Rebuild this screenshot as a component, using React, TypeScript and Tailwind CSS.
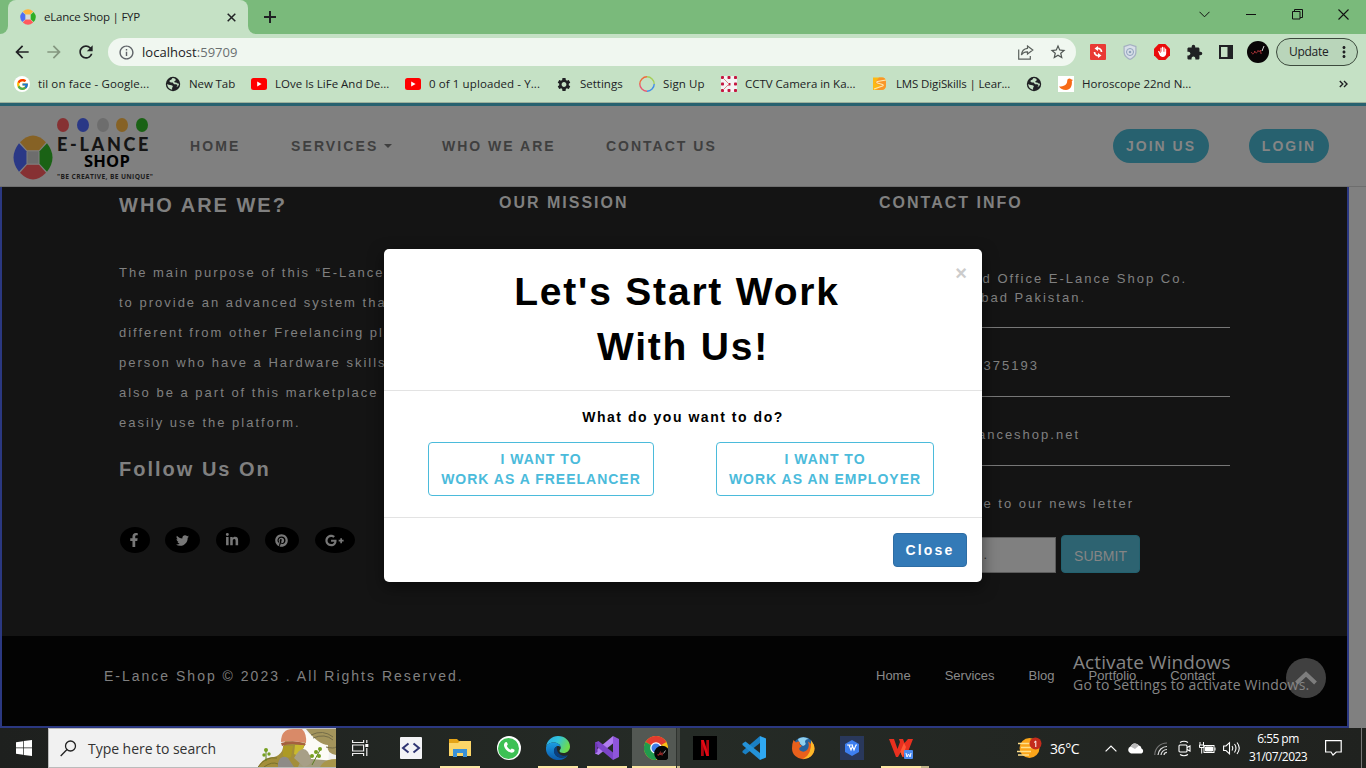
import React from "react";
import {
  MdArrowBack,
  MdArrowForward,
  MdRefresh,
  MdInfoOutline,
  MdStarBorder,
  MdExtension,
  MdSettings,
  MdMoreVert,
  MdBackHand,
} from "react-icons/md";
import { FcGoogle } from "react-icons/fc";
import {
  FaFacebookF,
  FaTwitter,
  FaLinkedinIn,
  FaPinterest,
  FaGooglePlusG,
  FaWhatsapp,
} from "react-icons/fa";

const YouTube = () => (
  <svg width="16" height="16" viewBox="0 0 16 16">
    <rect x="0" y="2" width="16" height="12" rx="2.5" fill="#f00" />
    <path d="M6.2 5.5v5L10.6 8z" fill="#fff" />
  </svg>
);

const Globe = () => (
  <svg width="16" height="16" viewBox="0 0 16 16">
    <circle cx="8" cy="8" r="7.2" fill="#202124" />
    <path
      d="M7.6 2.1c-.9.8-1 1.600-2.100 2-.9.3-1.400 1.300-.6 2 .8.6 1.900 0 2.800.5.800.5.4 1.400 1.500 1.600 1.100.2 2.400-.2 3 .6.500.8-.2 1.700-.8 2.400 1.700-.7 2.600-2 2.600-3.600-.9.3-1.500-.4-2.300-.9-.9-.5-2.300.1-2.500-.9-.2-.9 1.400-.8 1.500-1.900.1-.9-.8-1.600-3.100-1.800zM2.200 8c0 2.800 1.900 5.200 4.900 5.800.3-.9-.4-1.400.2-2.200.5-.7.9-1.500-.1-2-1.100-.6-2.900-.4-5-1.600z"
      fill="#c5e1c5"
    />
  </svg>
);

const Wheel = ({ size, h, dim }: { size: number; h: number; dim?: boolean }) => {
  const c = dim
    ? ["#866225", "#1a6215", "#863133", "#2a3886", "#6d6d6d", "#838383"]
    : ["#ffb43c", "#2fae24", "#ff5a5d", "#4f6df5", "#d9d9d9", "#c5e1c5"];
  return (
    <svg width={size} height={h} viewBox="0 0 40 44" preserveAspectRatio="none">
      <path d="M7 7Q20-6 33 7L26 15H14z" fill={c[0]} />
      <path d="M34 8Q45 22 34 36L26.500 28V16z" fill={c[1]} />
      <path d="M33 37Q20 50 7 37L14 29H26z" fill={c[2]} />
      <path d="M6 36Q-5 22 6 8L13.500 16V28z" fill={c[3]} />
      <rect x="14.500" y="16" width="11" height="12" fill={c[4]} />
    </svg>
  );
};

const Chrome = () => (
  <svg width="24" height="24" viewBox="0 0 24 24">
    <circle cx="12" cy="12" r="12" fill="#fbc116" />
    <path d="M12 12 1.600 6A12 12 0 0 1 22.400 6z" fill="#e33b2e" />
    <path d="M1.600 6A12 12 0 0 0 12 24l5.200-9L12 12z" fill="#219a4d" />
    <circle cx="12" cy="12" r="5.800" fill="#fff" />
    <circle cx="12" cy="12" r="4.500" fill="#3f7de8" />
    <circle cx="18" cy="17.500" r="7.800" fill="#050505" />
    <path d="M13.500 18.500c1 1.500 2-.5 2.600-1.500 0 2 1.300 1.500 2-.4v3" stroke="#a12a2a" strokeWidth="1.200" fill="none" />
    <path d="m19.500 17.500 2-3" stroke="#aaa" strokeWidth="1" />
  </svg>
);

const Edge = () => (
  <svg width="24" height="24" viewBox="0 0 24 24">
    <defs>
      <linearGradient id="eg" x1="0" x2="1" y1="0" y2=".4">
        <stop offset="0" stopColor="#2aa9e6" />
        <stop offset=".5" stopColor="#31c3dd" />
        <stop offset="1" stopColor="#6ddb4e" />
      </linearGradient>
      <linearGradient id="eb" x1="0" x2="0" y1="0" y2="1">
        <stop offset="0" stopColor="#1b9de2" />
        <stop offset="1" stopColor="#0b57a8" />
      </linearGradient>
    </defs>
    <path d="M0 11C1 4 6 0 12 0c7 0 12 5 12 10.500 0 4-3 6.500-6.500 6.500-2.500 0-4-1-4-2s1.300-1.500 1.300-3.400C14.800 8.500 11 6.500 7.500 6.500 3.500 6.500.8 8.800 0 11z" fill="url(#eg)" />
    <path d="M0 11.500C.8 8.500 4 6.600 7.500 6.600c4 0 7 2.200 7.200 4.900-1-1.300-2.500-1.700-3.700-1.300-3 1-4.400 6.300-.5 9.800 2.500 2.300 8 2.500 11.300-.8C19 23.500 14 24.700 9.500 23.700 3.500 22.200-.6 17.200 0 11.500z" fill="url(#eb)" />
    <path d="M11 10.200c-3.400 1.200-4.500 6.500-.5 9.800 3 2.500 9 2 11.400-1-2.900 1.300-6.500 1-9-1.600-2-2-2.300-4.800-1.900-7.200z" fill="#0b3f7d" />
  </svg>
);

const bookmarks = [
  { x: "w-[152px]", label: "til on face - Google...", tr: "tracking-[0.12px]", icon: <span className="flex size-4 items-center justify-center rounded-full bg-white"><FcGoogle size={13} /></span> },
  { x: "w-[86px]", label: "New Tab", tr: "tracking-[-0.1px]", icon: <Globe /> },
  { x: "w-[154px]", label: "LOve Is LiFe And De...", tr: "tracking-[0px]", icon: <YouTube /> },
  { x: "w-[151px]", label: "0 of 1 uploaded - Y...", tr: "tracking-[0.1px]", icon: <YouTube /> },
  { x: "w-[83px]", label: "Settings", tr: "tracking-[0px]", icon: <MdSettings size={17} color="#202124" /> },
  {
    x: "w-[82px]", label: "Sign Up", tr: "tracking-[0.1px]",
    icon: (
      <svg width="16" height="16" viewBox="0 0 16 16" fill="none" strokeWidth="1.400">
        <path d="M.8 8A7.200 7.200 0 0 1 8 .8" stroke="#f06a3c" />
        <path d="M8 .8A7.200 7.200 0 0 1 15.200 8" stroke="#a5cf58" />
        <path d="M15.200 8A7.200 7.200 0 0 1 8 15.200" stroke="#438ee8" />
        <path d="M8 15.200A7.200 7.200 0 0 1 .8 8" stroke="#e85a72" />
      </svg>
    ),
  },
  {
    x: "w-[151px]", label: "CCTV Camera in Ka...", tr: "tracking-[-0.02px]",
    icon: (
      <svg width="16" height="16" viewBox="0 0 16 16">
        <rect width="16" height="16" fill="#f4f4f4" />
        <g fill="#c4173f">
          {[0, 6.5, 13].map((x) => [0, 6.5, 13].filter((y) => !(x === 6.5 && y === 6.5)).map((y) => <rect key={x + "-" + y} x={x} y={y} width="3" height="3" rx=".8" />))}
          <rect x="7" y="7" width="2.500" height="2.500" />
        </g>
        <path d="m2.500 2.500 5.500 5.500-5.500 5.500" stroke="#d88" fill="none" />
      </svg>
    ),
  },
  {
    x: "w-[154px]", label: "LMS DigiSkills | Lear...", tr: "tracking-[-0.14px]",
    icon: (
      <svg width="16" height="16" viewBox="0 0 16 16">
        <path d="M1 1.500h9q4 0 4 4.500v3q0 5-5 5H1z" fill="#fdb913" />
        <path d="M7 1.500h3q4 0 4 4.500v3q0 5-5 5H4l5-4-6-3z" fill="#f9962a" />
        <path d="M14 4 5.500 5.500q-1.500.7 0 1.500l5 1.500q1.500.6 0 1.500L2 13" stroke="#ffe9b0" strokeWidth="1.100" fill="none" />
      </svg>
    ),
  },
  { x: "w-[32px]", label: "", tr: "", icon: <Globe /> },
  {
    x: "w-[140px]", label: "Horoscope 22nd N...", tr: "tracking-[0px]",
    icon: (
      <svg width="16" height="16" viewBox="0 0 16 16">
        <rect width="16" height="16" fill="#fff" />
        <path d="M1 10.500c5 0 8-1.500 8.200-5.500C9.300 2.500 12 2 13 3.200L15 4l-1.200 1c.7 5-1.600 9-5.800 9-3.500 0-5.500-1.500-7-3.500z" fill="#f76a16" />
      </svg>
    ),
  },
];

function Browser() {
  return (
    <div className="shrink-0 bg-[#c5e1c5] font-['Open_Sans',sans-serif] text-[#202124]">
      <div className="flex h-[34px] bg-[#7aba7b]">
        <div className="flex w-2 items-end bg-[#c5e1c5]"><span className="h-full w-2 rounded-br-lg bg-[#7aba7b]" /></div>
        <div className="flex w-[240px] items-center rounded-t-lg bg-[#c5e1c5] pl-3">
          <Wheel size={16} h={16} />
          <span className="ml-2 w-[183px] text-[11.5px] tracking-[-0.22px]">eLance Shop | FYP</span>
          <svg width="9" height="9" viewBox="0 0 9 9" stroke="#202124" strokeWidth="1.500"><path d="m.7.7 7.600 7.600M8.300.7.7 8.300" /></svg>
        </div>
        <div className="flex w-2 bg-[#c5e1c5]"><span className="h-full w-2 rounded-bl-lg bg-[#7aba7b]" /></div>
        <svg className="mt-[11px] ml-2" width="12" height="12" viewBox="0 0 12 12" stroke="#202124" strokeWidth="2"><path d="M6 0v12M0 6h12" /></svg>
        <div className="ml-auto flex h-7 items-center pr-[17px]">
          <svg className="mr-[36px]" width="11" height="7" viewBox="0 0 11 7" fill="none" stroke="#111"><path d="m.5.8 5 5 5-5" /></svg>
          <svg className="mr-[36px]" width="10" height="10" viewBox="0 0 10 10" stroke="#111"><path d="M0 5.500h10" /></svg>
          <svg className="mr-[35px]" width="11" height="11" viewBox="0 0 11 11" fill="none" stroke="#111"><path d="M.5 2.500h7.500v7.500H.5zM2.500 2.500V.5h8v8H8" /></svg>
          <svg width="11" height="11" viewBox="0 0 11 11" stroke="#111" strokeWidth="1.100"><path d="m.5.500 10 10M10.500.5l-10 10" /></svg>
        </div>
      </div>
      <div className="flex h-9 items-center pl-3">
        <MdArrowBack size={20} />
        <MdArrowForward size={20} className="ml-3" color="#84967f" />
        <MdRefresh size={20} className="ml-3" />
        <div className="ml-3 flex h-7 w-[968px] items-center rounded-full bg-[#f0f7f0] pl-[10px]">
          <MdInfoOutline size={17} color="#5f6368" />
          <span className="ml-[7px] pt-px text-[13px] tracking-[0.03px]">localhost<span className="text-[#6a6f70]">:59709</span></span>
          <svg className="ml-auto" width="16" height="15" viewBox="0 0 16 15" fill="none" stroke="#5a605c" strokeWidth="1.200">
            <path d="M.7 4.500v9.700h11.600V11M9.500 1l5.300 4-5.300 4V6.800C6.500 6.600 4.800 7.500 3.400 10 3.800 6 6 3.600 9.500 3.300z" />
          </svg>
          <MdStarBorder size={18} className="mr-[9px] ml-[15px]" color="#4f5552" />
        </div>
        <svg className="ml-[14px]" width="16" height="16" viewBox="0 0 16 16">
          <rect width="16" height="16" rx="1" fill="#e93a35" />
          <path d="M11.500 8A3.500 3.500 0 0 0 7 4.500M4.500 8A3.500 3.500 0 0 0 9 11.500" stroke="#fff" strokeWidth="1.700" fill="none" />
          <path d="M8 2v5L4.500 4.500zM8 14V9l3.500 2.500z" fill="#fff" />
        </svg>
        <svg className="ml-4" width="16" height="16" viewBox="0 0 16 16">
          <path d="M8 0 14.500 2v6c0 4-3 6.500-6.500 8-3.500-1.500-6.500-4-6.500-8V2z" fill="#a5b0c2" />
          <path d="M8 1.200 13.300 3v5c0 3.300-2.300 5.300-5.300 6.700C5 13.300 2.700 11.300 2.700 8V3z" fill="#d8dfe8" />
          <circle cx="8" cy="8" r="3.500" fill="none" stroke="#8fa3bb" />
          <circle cx="8" cy="8" r="1.300" fill="#8fa3bb" />
        </svg>
        <svg className="ml-4" width="16" height="16" viewBox="0 0 16 16">
          <path d="M4.700 0h6.600L16 4.700v6.600L11.300 16H4.700L0 11.300V4.700z" fill="#ea0b0b" />
          <MdBackHand x="3" y="2.500" size={10.500} color="#fff" />
        </svg>
        <MdExtension size={17} className="ml-4" />
        <svg className="ml-4" width="14" height="14" viewBox="0 0 14 14"><path d="M0 0h14v14H0zM2 2v10h6.500V2z" fill="#202124" fillRule="evenodd" /></svg>
        <svg className="ml-[14px]" width="22" height="22" viewBox="0 0 22 22">
          <circle cx="11" cy="11" r="11" fill="#080506" />
          <path d="M4.500 11c.5 3 3 2 3.300-1 .2 3 3 2 3.200-.5.5 1.500 2 1.500 2.500-.5l.6 4" stroke="#b0353a" fill="none" />
          <path d="m15 10 2-5" stroke="#ddd" />
        </svg>
        <div className="ml-[7px] flex h-7 w-[82px] items-center rounded-full border border-[#3c4a3d] bg-[#b9d5ba] pl-3">
          <span className="text-[12px] tracking-[-0.3px]">Update</span>
          <MdMoreVert size={18} className="ml-[7px] shrink-0" />
        </div>
      </div>
      <div className="flex h-8 items-center pb-1 pl-[14px]">
        {bookmarks.map((b, i) => (
          <div key={i} className={i === 0 ? "flex w-[151px] shrink-0 items-center gap-2 whitespace-nowrap" : "flex shrink-0 items-center gap-2 whitespace-nowrap " + b.x}>
            <span className="flex size-4 shrink-0 items-center justify-center">{b.icon}</span>
            <span className={"text-[11.5px] " + b.tr}>{b.label}</span>
          </div>
        ))}
        <svg className="mr-[18px] ml-auto" width="9" height="8" viewBox="0 0 9 8" fill="none" stroke="#202124" strokeWidth="1.400"><path d="m.8 1 3 3-3 3M5 1l3 3-3 3" /></svg>
      </div>
      <div className="h-px bg-[#9db19d]" />
    </div>
  );
}

function Navbar() {
  return (
    <nav className="flex h-[84px] shrink-0 border-t-[3px] border-b border-t-[#27616f] border-b-[#6e6e6e] bg-[#808080] text-[14px] font-bold text-[#3f3f3f]">
      <div className="flex w-[190px] pl-[13px]">
        <div className="pt-[29px]"><Wheel size={40} h={45} dim /></div>
        <div className="ml-[3px] w-[100px] pt-3">
          <div className="flex w-[92px] justify-between pl-px">
            <span className="h-[14px] w-3 rounded-[50%] bg-[#863133]" />
            <span className="h-[14px] w-3 rounded-[50%] bg-[#2a3886]" />
            <span className="h-[14px] w-3 rounded-[50%] bg-[#6d6d6d]" />
            <span className="h-[14px] w-3 rounded-[50%] bg-[#866225]" />
            <span className="h-[14px] w-3 rounded-[50%] bg-[#1a6215]" />
          </div>
          <div className="mt-[3px] pl-px font-['Lato',sans-serif] text-[18px] leading-[18px] font-black tracking-[2.7px] whitespace-nowrap text-[#151515]">E-LANCE</div>
          <div className="pl-7 font-['Open_Sans',sans-serif] text-[16.5px] leading-[16px] font-bold tracking-[0.2px] text-black">SHOP</div>
          <div className="mt-[4px] pl-px font-['Open_Sans',sans-serif] text-[6.7px] leading-[8px] font-bold tracking-[0.35px] whitespace-nowrap text-[#1c1c1c]">"BE CREATIVE, BE UNIQUE"</div>
        </div>
      </div>
      <div className="flex h-20 items-center">
        <span className="w-[101px] tracking-[2.1px]">HOME</span>
        <span className="flex w-[151px] items-center tracking-[2.1px]">SERVICES<span className="ml-[6px] border-x-4 border-t-4 border-x-transparent border-t-[#3f3f3f]" /></span>
        <span className="w-[164px] tracking-[2px]">WHO WE ARE</span>
        <span className="tracking-[2px]">CONTACT US</span>
      </div>
      <div className="ml-auto flex h-20 items-center gap-10 pr-[37px] text-[#858585]">
        <button className="h-[34px] w-24 rounded-[17px] bg-[#27616f] tracking-[2px]">JOIN US</button>
        <button className="h-[34px] w-20 rounded-[17px] bg-[#27616f] tracking-[2px]">LOGIN</button>
      </div>
    </nav>
  );
}

const lines = [
  "The main purpose of this “E-Lance Shop” is",
  "to provide an advanced system that is",
  "different from other Freelancing platforms,",
  "person who have a Hardware skills can",
  "also be a part of this marketplace and",
  "easily use the platform.",
];

function Footer() {
  return (
    <footer className="flex h-[541px] w-[1349px] flex-col border-x-2 border-b-2 border-[#2b3881]">
      <div className="flex h-[449px] shrink-0 bg-[#141414] pl-[117px] text-[13px] tracking-[2px] whitespace-nowrap text-[#808080]">
        <section className="w-[380px] pt-px">
          <h2 className="mb-9 h-[34px] text-[20px] leading-[34px] font-bold">WHO ARE WE?</h2>
          {lines.map((l) => <p key={l} className="h-[30px] leading-[30px]">{l}</p>)}
          <h2 className="mt-4 h-[30px] text-[20px] leading-[30px] font-bold">Follow Us On</h2>
          <div className="mt-[43px] flex pl-px text-[#777]">
            <span className="flex h-[26px] w-[30px] items-center justify-center rounded-[50%] bg-black pr-[3px]"><FaFacebookF size={14} /></span>
            <span className="ml-[15px] flex h-[26px] w-[35px] items-center justify-center rounded-[50%] bg-black pr-px"><FaTwitter size={13} /></span>
            <span className="ml-4 flex h-[26px] w-[34px] items-center justify-center rounded-[50%] bg-black pr-[2px]"><FaLinkedinIn size={14} /></span>
            <span className="ml-[15px] flex h-[26px] w-[34px] items-center justify-center rounded-[50%] bg-black pr-px"><FaPinterest size={13} /></span>
            <span className="ml-4 flex h-[26px] w-10 items-center justify-center rounded-[50%] bg-black pr-px"><FaGooglePlusG size={19} /></span>
          </div>
        </section>
        <section className="w-[380px] pt-px">
          <h3 className="h-[30px] text-[16px] leading-[30px] font-bold">OUR MISSION</h3>
        </section>
        <section className="w-[351px]">
          <h3 className="mb-[51px] h-[31px] pt-px text-[16px] leading-[30px] font-bold">CONTACT INFO</h3>
          <div className="flex h-[59px] flex-col border-b border-[#777] text-right leading-[19px]">
            <p className="pr-[43px]">Head Office E-Lance Shop Co.</p>
            <p className="pr-[144px]">Faisalabad Pakistan.</p>
          </div>
          <p className="h-[69px] border-b border-[#777] pt-[6px] pr-[191px] text-right leading-[64px]">0300 1375193</p>
          <p className="h-[69px] border-b border-[#777] pt-[6px] pr-[150px] text-right leading-[64px]">info@elanceshop.net</p>
          <p className="h-[69px] pt-[6px] pr-[96px] text-right leading-[63px]">Subscribe to our news letter</p>
          <div className="flex items-end pl-px">
            <div className="h-9 w-[176px] border border-[#5c5c5c] bg-[#808080] pr-[66px] text-right leading-[34px] text-[#333]">Email...</div>
            <button className="ml-[5px] h-[38px] w-[79px] rounded-[4px] border border-[#23616f] bg-[#2d6371] pt-1 text-[14px] tracking-[0px] text-[#858585]">SUBMIT</button>
          </div>
        </section>
      </div>
      <div className="flex h-[90px] items-center bg-[#030303] pb-[10px] pl-[102px] text-[#808080]">
        <span className="w-[772px] text-[14px] tracking-[2px]">E-Lance Shop © 2023 . All Rights Reserved.</span>
        <div className="flex gap-[34px] text-[13px] text-[#8a8a8a]">
          <span>Home</span><span>Services</span><span>Blog</span><span>Portfolio</span><span>Contact</span>
        </div>
      </div>
    </footer>
  );
}

function Modal() {
  return (
    <div className="absolute top-[249px] left-[384px] h-[333px] w-[598px] rounded-[5px] bg-white text-center text-black shadow-[0_5px_15px_rgba(0,0,0,0.5)]">
      <div className="h-[142px] border-b border-[#e3e3e3] px-12 pt-[15px] text-[39px] leading-[55px] font-bold tracking-[1.8px]">
        <p className="pr-[12px]">Let's Start Work</p>
        <p>With Us!</p>
        <button className="absolute top-[12px] right-[15px] text-[20px] leading-6 tracking-normal text-[#ccc]">×</button>
      </div>
      <div className="h-[127px] border-b border-[#e3e3e3] pt-[14px]">
        <p className="text-[14px] leading-6 font-bold tracking-[1.53px]">What do you want to do?</p>
        <div className="mt-[13px] flex justify-between pr-12 pl-11 text-[14px] leading-5 font-bold tracking-[1px] text-[#4bbbdb]">
          <button className="h-[54px] w-[226px] rounded-[4px] border border-[#4bbbdb]">I WANT TO<br />WORK AS A FREELANCER</button>
          <button className="h-[54px] w-[218px] rounded-[4px] border border-[#4bbbdb]">I WANT TO<br />WORK AS AN EMPLOYER</button>
        </div>
      </div>
      <div className="flex justify-end pt-[15px] pr-[15px]">
        <button className="h-[34px] w-[74px] rounded-[4px] border border-[#2e6da4] bg-[#337ab7] text-[14px] font-black tracking-[2.200px] text-white">Close</button>
      </div>
    </div>
  );
}

const apps = [
  { bar: false, icon: <svg width="22" height="22" viewBox="0 0 22 22"><rect width="22" height="22" rx="1" fill="#f3f3f6" /><path d="M8.500 6.500 3 11l5.500 4.500M13.500 6.500 19 11l-5.500 4.500" stroke="#2f3573" strokeWidth="2" fill="none" /></svg> },
  { bar: true, icon: <svg width="22" height="18" viewBox="0 0 22 18"><path d="M0 0h8l2 2h12v15H0z" fill="#e5a417" /><path d="M0 4h9l2-2h11v15H0z" fill="#fcd668" /><path d="M4 18v-8h14v8h-4v-4H8v4z" fill="#3b92d8" /></svg> },
  { bar: false, icon: <span className="flex size-6 items-center justify-center rounded-full bg-white"><span className="flex size-[21px] items-center justify-center rounded-full bg-[#3dc154]"><svg width="14" height="14" viewBox="0 0 14 14"><path d="M3 1.500c1-1 2-.6 2.300.6l.5 1.500-1 1.300q1 2.500 3.700 3.900l1.300-1.200 2.400 1c.6.5.3 2-.8 2.700-2 1-5-.1-7.500-2.900C1.500 5.800 1.500 3 3 1.500z" fill="#fff" /></svg></span></span> },
  { bar: true, icon: <Edge /> },
  { bar: true, icon: <svg width="24" height="24" viewBox="0 0 24 24"><path d="m18 0 6 3v18l-6 3z" fill="#8f55da" /><path d="M18 0v7.500L3.500 19 0 17.500V15z" fill="#b07cf0" /><path d="M18 24v-7.500L3.500 5 0 6.500V9z" fill="#7c45c9" /><path d="M0 6.500 2.500 8v8L0 17.500z" fill="#6c36b0" /></svg> },
];
const apps2 = [
  { icon: <svg width="24" height="24" viewBox="0 0 24 24"><rect width="24" height="24" fill="#000" /><path d="M8 4h2.800v16H8zM13.300 4H16v16h-2.700z" fill="#b1060f" /><path d="M8 4h2.800L16 20h-2.700z" fill="#e50914" /></svg> },
  { icon: <svg width="24" height="24" viewBox="0 0 24 24"><path d="m18 0 6 2.500v19L18 24z" fill="#2fa8f2" /><path d="M18 0v7L3.500 18.500.500 16.500V15z" fill="#1a80c4" /><path d="M18 24v-7L3.500 5.500l-3 2V9z" fill="#2492d8" /></svg> },
  { icon: <svg width="24" height="24" viewBox="0 0 24 24"><circle cx="12.500" cy="11.500" r="10.500" fill="#25629f" /><path d="M7 3q5-3.500 11 0-4 0-4 3 2 3-2 4-4-2-5-7z" fill="#8fd0ee" /><path d="M2.500 4 5 6.500q2-1.500 4-.5-1.500 2.500 1 3 1.500.5 0 2-3 1-1 3.500 3.500 2.500 7-.5 3-3 1-8.500 3 1.500 3.500 3.500L20 4.500q3.500 4 3.500 8A11 11 0 0 1 12 23.200 11 11 0 0 1 1 12.500Q1 7.500 2.500 4z" fill="#e8601c" /><path d="M20 4.500q3.500 4 3.500 8A11 11 0 0 1 12 23q9-4 8-18.500z" fill="#fbb829" /></svg> },
  { icon: <svg width="24" height="24" viewBox="0 0 24 24"><rect width="24" height="24" fill="#29385b" /><path d="m12 4 7 4v8l-7 4-7-4V8z" fill="#3d7ff0" /><path d="M7 9h2l2 5 1.500-4L14 14l2-5h1M9 9h4" stroke="#fff" strokeWidth="1.100" fill="none" /></svg> },
  { bar: true, icon: <svg width="24" height="24" viewBox="0 0 24 24"><path d="M0 3h5l3.500 10L11 6l-1-3h4l1.500 4L19 3h5l-7 18h-3.500l-2-5L9 21H7z" fill="#e8301f" /><path d="m9 21 6-14 2 4-3.500 10-2-5z" fill="#ff5a36" /><rect x="15" y="14" width="9" height="9" rx="1" fill="#4d8cf0" /><path d="m17 17 1 4 1.500-3 1.500 3 1-4" stroke="#fff" fill="none" /></svg> },
];

function Cell({ children, bar }: { children: React.ReactNode; bar?: boolean }) {
  return (
    <div className="flex w-[49px] flex-col items-center">
      <div className="flex h-[38px] items-center pt-[2px]">{children}</div>
      <div className={bar ? "h-[2px] w-10 bg-[#fbe6a3]" : "h-[2px] w-10"} />
    </div>
  );
}

function Taskbar() {
  return (
    <div className="flex h-10 shrink-0 bg-linear-to-r from-[#1e201e] via-[#252b26] to-[#20221f] font-['Open_Sans',sans-serif] text-white">
      <div className="flex w-12 items-center justify-center">
        <svg width="16" height="16" viewBox="0 0 16 16" fill="#fff"><path d="M0 2.200 7 1.200v6.300H0zM7.700 1.100 16 0v7.500H7.700zM0 8.300h7v6.500l-7-1zM7.700 8.300H16V16l-8.300-1.100z" /></svg>
      </div>
      <div className="flex w-[288px] items-center border-t border-b border-l border-[#bbb] bg-[#f1f1f1]">
        <svg className="ml-[11px]" width="17" height="17" viewBox="0 0 17 17" fill="none" stroke="#222" strokeWidth="1.300"><circle cx="10.500" cy="6" r="5" /><path d="M7 9.500.7 16" /></svg>
        <span className="ml-[11px] text-[14px] tracking-[-0.04px] text-[#333]">Type here to search</span>
        <svg className="ml-auto" width="78" height="38" viewBox="0 0 78 38">
          <path d="M0 38q5-10 16-10 5-1 8-6l3-10 22 2 4 24z" fill="#a38e3a" />
          <path d="M47 2q10 8 20 9 6 8 3 20-6 6-14 2l-12-12q5-6 3-15z" fill="#fcfbf6" />
          <path d="M45 26q8-3 8 4l25 2v6H40z" fill="#a39c7c" />
          <path d="M62 38q4-8 16-8v8z" fill="#a8964a" />
          <path d="M23 13q0-13 12-13h9q5 5 4 14-13-3-25-1z" fill="#d98a68" />
          <path d="M23 14q13-4 25 1l-2 2q-12-4-22 0z" fill="#a5603f" />
          <path d="M25 17h10l-2 11q-5 2-8-1z" fill="#ad9a25" />
          <path d="M37 16h9l-3 12-7-3z" fill="#c9b92e" />
          <path d="M36 29q8-14 14-6l4 9q-3 5-8 6z" fill="#a79f87" />
          <path d="M20 34q3-9 10-5l6 9H20z" fill="#8e8b87" />
          <path d="M48 0h30v26q-10-2-8-10-9 0-22-16z" fill="#a3945c" />
          <path d="M53 6q12-6 22 2M55 9q12-5 20 2M68 18q8 2 10 0" stroke="#756d48" fill="none" />
          <path d="M0 38q8-11 19-9M6 38q8-6 14-3" stroke="#77702b" fill="none" />
          <path d="M8 32V20M54 36l8-15" stroke="#5c7e23" fill="none" />
          <g fill="#76a021"><circle cx="8" cy="21" r="2" /><circle cx="11" cy="25" r="1.700" /><circle cx="6" cy="26" r="1.700" /><circle cx="58" cy="23" r="2" /><circle cx="62" cy="20" r="2" /><circle cx="54" cy="27" r="2" /><circle cx="61" cy="27" r="2" /></g>
        </svg>
      </div>
      <div className="flex w-[50px] items-center justify-center pr-[2px]">
        <svg width="17" height="16" viewBox="0 0 17 16" fill="none" stroke="#eee" strokeWidth="1.200"><path d="M.6 0v2.500h11V0M.6 16v-2.500h11V16M.6 5h11v6H.6zM14.800 0v3M14.800 8v8" /><path d="M13.300 4h3v3h-3z" fill="#fff" stroke="none" /></svg>
      </div>
      {apps.map((a, i) => <Cell key={i} bar={a.bar}>{a.icon}</Cell>)}
      <div className="ml-px flex w-11 flex-col bg-[#535853]">
        <div className="flex h-[38px] items-center justify-center pt-[2px] pl-[4px]"><Chrome /></div>
        <div className="h-[2px] w-full bg-[#fbe6a3]" />
      </div>
      <div className="flex w-1 flex-col border-l border-[#2f332f] bg-[#454944]"><div className="mt-auto h-[2px] bg-[#c8b98a]" /></div>
      {apps2.map((a, i) => <Cell key={i} bar={a.bar}>{a.icon}</Cell>)}
      <div className="-ml-1 h-[2px] w-2 self-end bg-[#c1b488]" />
      <div className="ml-auto flex w-[349px] items-center">
        <svg width="25" height="22" viewBox="0 0 25 22">
          <circle cx="12.500" cy="11" r="10" fill="#fba51a" />
          <path d="M1 6.500h12M4 10.500h15M0 14.500h14M1 18h11" stroke="#ffdf8a" strokeWidth="1.500" />
          <circle cx="18.500" cy="6.500" r="6" fill="#c42b1c" />
          <path d="M17 5.500 18.800 4v6" stroke="#fff" fill="none" />
        </svg>
        <span className="ml-[8px] w-[53px] text-[14px] tracking-[-0.4px]">36°C</span>
        <svg className="ml-[2px]" width="12" height="7" viewBox="0 0 12 7" fill="none" stroke="#fff" strokeWidth="1.200"><path d="m.6 6.400 5.400-5.400 5.400 5.400" /></svg>
        <svg className="ml-[10px]" width="17" height="11" viewBox="0 0 17 11"><path d="M4 10.500A3.700 3.700 0 0 1 3.500 3.500 5 5 0 0 1 12 2.500a3.500 3.500 0 0 1 2.500 3 2.700 2.700 0 0 1 0 5z" fill="#fff" /><path d="M3.500 3.500A5 5 0 0 1 12 2.500L8 6z" fill="#b9b9b9" /></svg>
        <svg className="ml-[10px]" width="13" height="13" viewBox="0 0 13 13" fill="none" strokeWidth="1.200"><path d="M.8 13A12 12 0 0 1 13 1" stroke="#777" /><path d="M4 13a9 9 0 0 1 9-8.500M7 13a6 6 0 0 1 6-5.500M10 13a3 3 0 0 1 3-2.700" stroke="#ddd" /></svg>
        <svg className="ml-[11px]" width="13" height="17" viewBox="0 0 13 17" fill="none" stroke="#fff" strokeWidth="1.100"><rect x="1" y="5" width="8" height="7" rx="1" /><path d="M9 7.500 12 6v5L9 9.500M2 2.500Q6 0 10 2.500M2 14.500q4 2.500 8 0" /></svg>
        <svg className="ml-[8px]" width="17" height="12" viewBox="0 0 17 12" fill="none" stroke="#fff"><rect x="5" y="3.500" width="10" height="7" /><path d="M6.500 5h7v4h-7z" fill="#fff" /><path d="M16 5.500v3M1 0v3M4.500 0v3M.5 3h4.500v2.500H.5zM2.700 6v5.500" /></svg>
        <svg className="ml-[7px]" width="17" height="14" viewBox="0 0 17 14" fill="none" stroke="#fff" strokeWidth="1.100"><path d="M.6 5v4.500H3l3.500 3.300V1.700L3 5zM9 5q1.500 2 0 4.500M11.500 3q3 4 0 8.500M14 1.500q4.500 5.500 0 11.500" /></svg>
        <div className="ml-[7px] w-[62px] text-center text-[12px] leading-[18px] tracking-[-0.55px]">6:55 pm<br />31/07/2023</div>
        <svg className="ml-[16px]" width="17" height="16" viewBox="0 0 17 16" fill="none" stroke="#fff" strokeWidth="1.200"><path d="M.6.6h15.600v11.400h-5L8 15l-2-3H.6z" /></svg>
        <span className="mr-1 ml-auto h-10 w-px bg-[#777]" />
      </div>
    </div>
  );
}

export default function App() {
  return (
    <div className="relative flex h-[768px] w-[1366px] flex-col overflow-hidden bg-[#808080] font-['Liberation_Sans',Arial,sans-serif]">
      <Browser />
      <Navbar />
      <Footer />
      <Taskbar />
      <div className="absolute top-[658px] left-[1286px] flex size-10 items-center justify-center rounded-full bg-[#404040]">
        <svg width="22" height="14" viewBox="0 0 22 14" fill="none" stroke="#7d7d7d" strokeWidth="4"><path d="m1.500 12 9.500-9 9.500 9" /></svg>
      </div>
      <div className="absolute top-[649px] left-[1073px] font-['Open_Sans',sans-serif] whitespace-nowrap text-[#858585]">
        <p className="text-[19px] leading-[26px] tracking-[0.1px]">Activate Windows</p>
        <p className="text-[14px] leading-[20px] tracking-[0.2px]">Go to Settings to activate Windows.</p>
      </div>
      <Modal />
    </div>
  );
}
